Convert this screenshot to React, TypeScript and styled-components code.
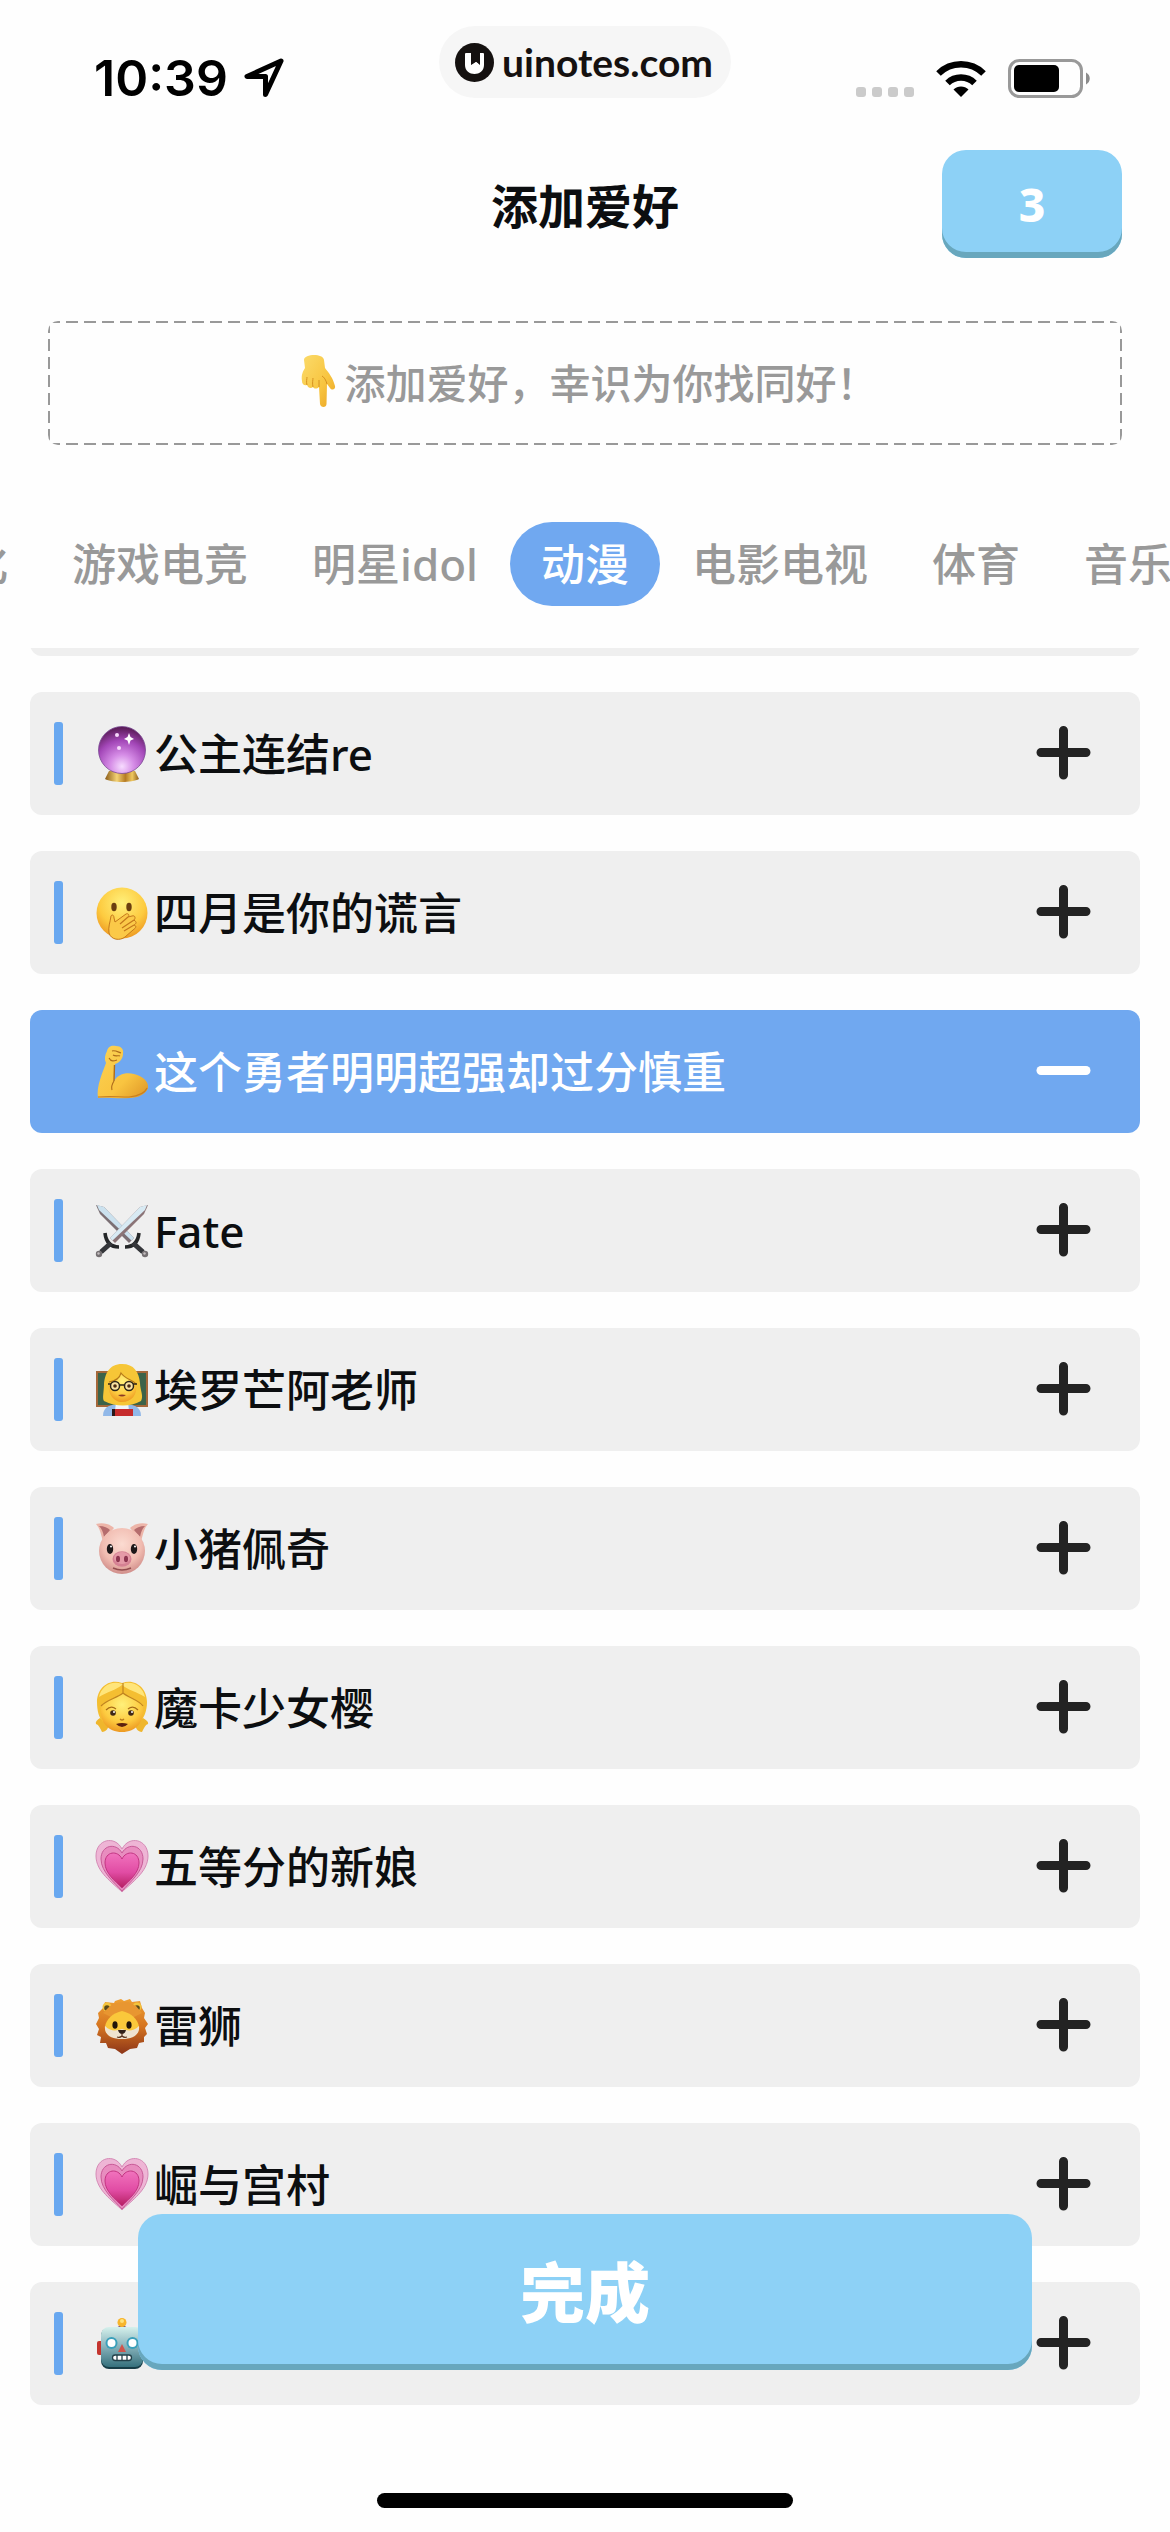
import React, { useLayoutEffect, useRef, useState } from "react";
import styled, { createGlobalStyle } from "styled-components";

const GlobalStyle = createGlobalStyle`
  *,
  *::before,
  *::after {
    box-sizing: border-box;
  }

  body {
    margin: 0;
    background: #fefefe;
    color: #0c0e10;
    font-family: "Noto Sans", "Noto Sans CJK SC", sans-serif;
  }

  button {
    border: none;
    padding: 0;
    margin: 0;
    background: none;
    color: inherit;
    font: inherit;
    cursor: pointer;
  }
`;

const Screen = styled.div`
  height: 100vh;
  display: flex;
  flex-direction: column;
  overflow: hidden;
`;

const StatusBar = styled.div`
  display: grid;
  grid-template-columns: 1fr auto 1fr;
  align-items: end;
  padding: 26px 79px 0;
`;

const Clock = styled.div`
  display: flex;
  align-items: center;
  gap: 16px;
  padding-left: 15px;
  color: #000;
  font-family: Inter, sans-serif;
  font-size: 50px;
  font-weight: 600;
  line-height: 40px;
`;

const Watermark = styled.a`
  display: flex;
  align-items: center;
  gap: 8px;
  height: 72px;
  padding: 0 18px 0 16px;
  border-radius: 36px;
  background: #f6f6f6;
  color: #151110;
  font-family: Lato, sans-serif;
  font-size: 39px;
  font-weight: 700;
  line-height: 48px;
  text-decoration: none;
`;

const StatusIcons = styled.div`
  display: flex;
  align-items: center;
  justify-content: flex-end;
  gap: 22px;
`;

const Header = styled.header`
  display: grid;
  grid-template-columns: 1fr auto 1fr;
  align-items: center;
  margin-top: 52px;
  padding: 0 48px;
`;

const Title = styled.h1`
  grid-column: 2;
  margin: 0;
  font-family: "Noto Sans CJK SC", sans-serif;
  font-size: 47px;
  font-weight: 700;
  line-height: 64px;
`;

const RaisedButton = styled.button`
  background: #8dd1f6;
  box-shadow: inset 0 -6px 0 #68a7bd;
  border-radius: 24px;
  color: #fff;
`;

const CountButton = styled(RaisedButton)`
  justify-self: end;
  width: 180px;
  height: 108px;
  font-size: 46px;
  font-weight: 800;
  line-height: 64px;
`;

const dash = "#999 0 12px, transparent 12px 18px";

const Hint = styled.p`
  display: flex;
  align-items: center;
  justify-content: center;
  height: 124px;
  margin: 63px 48px 0;
  padding-bottom: 4px;
  border-radius: 10px;
  background:
    repeating-linear-gradient(90deg, ${dash}) top / 100% 2px no-repeat,
    repeating-linear-gradient(90deg, ${dash}) bottom / 100% 2px no-repeat,
    repeating-linear-gradient(180deg, ${dash}) left / 2px 100% no-repeat,
    repeating-linear-gradient(180deg, ${dash}) right / 2px 100% no-repeat;
  color: #999;
  font-family: "Noto Sans CJK SC", sans-serif;
  font-size: 41px;
  font-weight: 500;
  line-height: 60px;
`;

const Tabs = styled.nav`
  display: flex;
  flex-shrink: 0;
  margin-top: 77px;
  overflow-x: auto;
  scrollbar-width: none;
`;

const Tab = styled.button<{ $active?: boolean }>`
  flex-shrink: 0;
  height: 84px;
  padding: 0 ${(props) => (props.$active ? "31px" : "32px")};
  border-radius: 42px;
  background: ${(props) => (props.$active ? "#70a8f0" : "transparent")};
  color: ${(props) => (props.$active ? "#fff" : "#999")};
  font-size: 44px;
  font-weight: 500;
  line-height: 64px;
  white-space: nowrap;
`;

const Content = styled.main`
  position: relative;
  flex: 1;
  min-height: 0;
  margin-top: 42px;
`;

const List = styled.ul`
  display: flex;
  flex-direction: column;
  gap: 36px;
  height: 100%;
  margin: 0;
  padding: 0 30px;
  overflow-y: auto;
  scrollbar-width: none;
  list-style: none;
`;

const Row = styled.li<{ $selected?: boolean }>`
  display: flex;
  flex-shrink: 0;
  align-items: center;
  height: 123px;
  padding: 0 49px 0 24px;
  border-radius: 12px;
  background: ${(props) => (props.$selected ? "#70a8f0" : "#efefef")};
  color: ${(props) => (props.$selected ? "#fff" : "inherit")};
`;

const Marker = styled.span<{ $hidden?: boolean }>`
  width: 9px;
  height: 63px;
  margin-right: 33px;
  border-radius: 3px;
  background: ${(props) => (props.$hidden ? "transparent" : "#69a8f0")};
`;

const Name = styled.span`
  flex-grow: 1;
  margin-left: 6px;
  font-size: 44px;
  font-weight: 500;
  line-height: 64px;
  white-space: nowrap;
`;

const ToggleButton = styled.button<{ $selected?: boolean }>`
  display: flex;
  color: ${(props) => (props.$selected ? "#fff" : "#232323")};
`;

const DoneButton = styled(RaisedButton)`
  position: absolute;
  right: 138px;
  bottom: 35px;
  left: 138px;
  height: 156px;
  padding-bottom: 6px;
  font-family: "Noto Sans CJK SC", sans-serif;
  font-size: 65px;
  font-weight: 900;
  line-height: 96px;
`;

const HomeArea = styled.footer`
  display: flex;
  justify-content: center;
  padding: 88px 0 24px;
`;

const HomeIndicator = styled.div`
  width: 416px;
  height: 15px;
  border-radius: 8px;
  background: #000;
`;

const EmojiSvg = styled.svg`
  flex-shrink: 0;
  width: 52px;
  height: 52px;
  overflow: visible;
`;

const PointDown = () => (
  <>
    <defs>
      <linearGradient id="point" x1="0" y1="0" x2="1" y2="1">
        <stop offset="0" stopColor="#fbdb6b" />
        <stop offset="0.6" stopColor="#f8c540" />
        <stop offset="1" stopColor="#e9a224" />
      </linearGradient>
    </defs>
    <path
      d="M11 5C11-1 30-2 31 5L32 13C36 18 40 23 42 31C43 34 39 36 37 33L34 29L33.500 49C33.500 53 27.500 53 27 49L26 32C24 34 21 34 20 32C18 34 15 33 14 30C11 31 9 29 9 26C8 20 10 16 12 13Z"
      fill="url(#point)"
    />
    <path d="M14 30C13 27 14 24 14 22M20 32C19 28 20 25 20 23M26 32L26 25M34 29C33 25 31 22 29 21" fill="none" stroke="#d6921f" strokeWidth="1" />
  </>
);

const CrystalBall = () => (
  <>
    <defs>
      <radialGradient id="ball" cx="0.5" cy="0.85" r="0.85">
        <stop offset="0" stopColor="#f7dcff" />
        <stop offset="0.3" stopColor="#d58ce6" />
        <stop offset="0.65" stopColor="#a347b8" />
        <stop offset="1" stopColor="#54184f" />
      </radialGradient>
      <linearGradient id="ballBase">
        <stop offset="0" stopColor="#8a5a18" />
        <stop offset="0.35" stopColor="#f4d375" />
        <stop offset="0.6" stopColor="#b57b25" />
        <stop offset="0.8" stopColor="#efc85f" />
        <stop offset="1" stopColor="#8d5e1b" />
      </linearGradient>
    </defs>
    <path d="M13 43H39L43 51C36 55 16 55 9 51Z" fill="url(#ballBase)" />
    <circle cx="26" cy="22" r="23.500" fill="url(#ball)" stroke="#7a4a94" strokeWidth="0.800" />
    <path d="M33 5L34.500 9L38 11L34.500 12.500L33 17L31.500 12.500L28 11L31.500 9Z" fill="#fff" />
    <circle cx="21" cy="7" r="2" fill="#f6d9fb" />
    <circle cx="23" cy="20" r="2" fill="#f6d9fb" />
  </>
);

const FaceGradient = ({ id }: { id: string }) => (
  <defs>
    <radialGradient id={id} cx="0.5" cy="0.3" r="0.75">
      <stop offset="0" stopColor="#fff07a" />
      <stop offset="0.6" stopColor="#fdcb40" />
      <stop offset="1" stopColor="#ea8f1c" />
    </radialGradient>
  </defs>
);

const HandOverMouth = () => (
  <>
    <FaceGradient id="shyFace" />
    <circle cx="26" cy="26" r="25.500" fill="url(#shyFace)" />
    <ellipse cx="18" cy="20" rx="2.700" ry="4.200" fill="#6b3f10" />
    <ellipse cx="33" cy="20" rx="2.700" ry="4.200" fill="#6b3f10" />
    <path
      d="M15 29C16 27 18 28 18 31L19 35L30 27C32 26 34 28 32 30L36 29C39 28 40 31 38 33L39 34C41 35 40 37 38 38C41 39 40 41 37 43L29 50C24 54 15 53 13 46C12 40 14 36 15 29Z"
      fill="#fbc948"
      stroke="#c4781b"
      strokeWidth="1"
    />
    <path d="M24 37L32 30M26 41L38 33M28 44L38 38" stroke="#c4781b" strokeWidth="1.200" />
  </>
);

const Biceps = () => (
  <>
    <defs>
      <linearGradient id="arm" x1="0" y1="0" x2="1" y2="1">
        <stop offset="0" stopColor="#fbd356" />
        <stop offset="0.6" stopColor="#f9c440" />
        <stop offset="1" stopColor="#dd9426" />
      </linearGradient>
    </defs>
    <path
      d="M11 5C12 0 16-1 20 0C25 0 28 3 27 8C27 13 23 17 19 18L18 35C22 28 30 26 38 28C47 30 53 36 52 42C50 48 42 52 34 52C22 53 11 51 2 52C0 40 7 26 10 17C8 13 9 9 11 5Z"
      fill="url(#arm)"
    />
    <path d="M16 5C19 4 22 6 25 7M17 9C20 11 23 9 24 10M13 12C15 16 18 15 21 14M18 35C16 38 15 40 16 44" fill="none" stroke="#ad6b1b" strokeWidth="1.100" />
    <path d="M18.500 19L18 35" stroke="#ad6b1b" strokeWidth="1.400" />
    <path d="M2 51C14 50 22 51 33 51C42 50 49 47 51 42" fill="none" stroke="#c97f20" strokeWidth="1.200" />
  </>
);

const Swords = () => (
  <>
    <path d="M0 0L8 2L38 33L33 38L4 9Z" fill="#7b6f74" />
    <path d="M1 0L8 2L38 33L35.500 35.500L3 5Z" fill="#cbe1ee" />
    <path d="M52 0L44 2L14 33L19 38L48 9Z" fill="#8b7477" />
    <path d="M51 0L44 2L14 33L16.500 35.500L49 5Z" fill="#d8eaf3" />
    <path d="M9 28C10 37 15 42 23 42M43 28C42 37 37 42 29 42" fill="none" stroke="#252729" strokeWidth="3.600" />
    <path d="M15 38L5 47M37 38L47 47" stroke="#34363a" strokeWidth="5" />
    <circle cx="3" cy="49" r="3.200" fill="#746f72" />
    <circle cx="49" cy="49" r="3.200" fill="#746f72" />
    <circle cx="2.500" cy="48.500" r="1.200" fill="#c4bec0" />
    <circle cx="48.500" cy="48.500" r="1.200" fill="#c4bec0" />
  </>
);

const Teacher = () => (
  <>
    <FaceGradient id="teacherFace" />
    <rect x="1" y="8" width="50" height="34" fill="#3c6349" stroke="#a5683a" strokeWidth="2" />
    <path d="M7 52C7 42 15 40 26 40C37 40 45 42 45 52Z" fill="#91b8e8" />
    <path d="M20 38H32L33 47H19Z" fill="#f2f5f9" />
    <path d="M26 0C13 0 9 10 8 20C8 28 6 34 8 37C20 43 34 43 45 37C48 32 44 26 44 19C43 8 38 0 26 0Z" fill="#f6c637" />
    <path d="M13 18C21 17 24 12 25 9C29 15 37 16 40 20C42 31 35 38 26 38C18 38 11 30 13 18Z" fill="url(#teacherFace)" />
    <path d="M13 18C20 17 24 13 25 9C29 15 37 16 40 20" fill="none" stroke="#b57918" strokeWidth="1.100" />
    <circle cx="19" cy="22" r="4.500" fill="#f8e2a3" stroke="#2c2519" strokeWidth="1.500" />
    <circle cx="33" cy="22" r="4.500" fill="#f8e2a3" stroke="#2c2519" strokeWidth="1.500" />
    <path d="M12 20H15M23.500 21H28.500M37 20H41" stroke="#2c2519" strokeWidth="1.500" />
    <circle cx="19" cy="22" r="1.800" fill="#4b2c12" />
    <circle cx="33" cy="22" r="1.800" fill="#4b2c12" />
    <path d="M22 31Q26 34 30 31Q26 30 22 31" fill="#8c3a25" />
    <path d="M17 45H37V52H17Z" fill="#c62b2c" />
    <path d="M16 45H19V52H16Z" fill="#2b1717" />
  </>
);

const Pig = () => (
  <>
    <defs>
      <radialGradient id="pigFace" cx="0.5" cy="0.35" r="0.7">
        <stop offset="0" stopColor="#fbdbd1" />
        <stop offset="0.6" stopColor="#f1bcb1" />
        <stop offset="1" stopColor="#c98482" />
      </radialGradient>
    </defs>
    <path d="M0 1C7-1 14 1 18 5L7 18C5 12 4 5 0 1ZM52 1C45-1 38 1 34 5L45 18C47 12 48 5 52 1Z" fill="#edb5a9" />
    <path d="M3 3C8 3 12 5 14 7L8 14C7 9 6 6 3 3ZM49 3C44 3 40 5 38 7L44 14C45 9 46 6 49 3Z" fill="#b56c6d" />
    <ellipse cx="26" cy="28" rx="23" ry="23" fill="url(#pigFace)" />
    <ellipse cx="14" cy="26" rx="3.200" ry="5" fill="#1d1718" />
    <ellipse cx="38" cy="26" rx="3.200" ry="5" fill="#1d1718" />
    <circle cx="15" cy="23.500" r="1" fill="#fff" />
    <circle cx="39" cy="23.500" r="1" fill="#fff" />
    <ellipse cx="26" cy="36" rx="9.500" ry="7.800" fill="#d58193" />
    <ellipse cx="26" cy="35" rx="8" ry="6" fill="#e59aa7" />
    <ellipse cx="22" cy="36" rx="2" ry="3.200" fill="#8e3650" />
    <ellipse cx="30" cy="36" rx="2" ry="3.200" fill="#8e3650" />
    <path d="M17 45Q26 49 35 45" fill="none" stroke="#934c4e" strokeWidth="1.500" />
  </>
);

const Girl = () => (
  <>
    <FaceGradient id="girlFace" />
    <path d="M4 36C1 38-1 40 0 42C3 43 4 46 6 50C10 50 13 46 13 41ZM47 36C50 38 53 40 52 42C49 43 48 46 46 50C42 50 39 46 39 41Z" fill="#efb62d" />
    <path d="M26 1C13-4 1 6 1 20C1 29 3 36 7 40H44C48 36 51 29 51 20C51 6 39-4 26 1Z" fill="#f4be31" />
    <path d="M26 2C15-2 5 5 3 15C11 10 20 8 26 3C32 8 41 10 49 15C47 5 37-2 26 2Z" fill="#ffe57a" />
    <path d="M27 11C21 16 10 18 5 24C3 40 12 50 26 50C40 50 49 40 47 24C43 18 33 16 27 11Z" fill="url(#girlFace)" />
    <path d="M27 1V11C21 16 10 18 5 24M27 11C33 16 43 18 47 24" fill="none" stroke="#c08420" strokeWidth="1.200" />
    <path d="M10 28Q15 23 20 27M32 27Q37 23 42 28" fill="none" stroke="#a86c18" strokeWidth="1.200" />
    <circle cx="17" cy="31" r="2.800" fill="#402716" />
    <circle cx="35" cy="31" r="2.800" fill="#402716" />
    <circle cx="18" cy="30" r="1" fill="#fff" />
    <circle cx="36" cy="30" r="1" fill="#fff" />
    <path d="M24 37Q26 39 28 37" fill="none" stroke="#b97b1c" strokeWidth="1.200" />
    <path d="M20 42Q26 40 32 42Q26 48 20 42" fill="#5b210f" />
  </>
);

const Heart = () => (
  <>
    <defs>
      <linearGradient id="heart" x1="0" y1="0" x2="0" y2="1">
        <stop offset="0" stopColor="#f173bd" />
        <stop offset="0.55" stopColor="#e14ca4" />
        <stop offset="1" stopColor="#b51f62" />
      </linearGradient>
    </defs>
    <path d="M26 51C17 42 0 31 0 15C0-2 19-6 26 8C33-6 52-2 52 15C52 31 35 42 26 51Z" fill="#eeb5d5" stroke="#d58bb6" strokeWidth="1" />
    <path d="M26 50C19 42 5 31 5 18C5 4 20 1 26 12C32 1 47 4 47 18C47 31 33 42 26 50Z" fill="#e88dbf" stroke="#c85a97" strokeWidth="1" />
    <path d="M26 47C19 40 9 32 9 22C9 10 22 9 26 18C30 9 43 10 43 22C43 32 33 40 26 47Z" fill="url(#heart)" stroke="#c33482" strokeWidth="1" />
  </>
);

const Lion = () => (
  <>
    <defs>
      <linearGradient id="mane" x1="0" y1="0" x2="0" y2="1">
        <stop offset="0" stopColor="#efa033" />
        <stop offset="0.5" stopColor="#d57420" />
        <stop offset="1" stopColor="#8c3518" />
      </linearGradient>
    </defs>
    <path
      d="M19 1L25-1L28 1L34-1L36 2L44 1L46 8L49 13L48 18L52 24L49 28L51 34L48 37L48 42L43 43L41 48L34 49L26 54L19 49L12 48L10 43L4 43L5 37L1 35L3 29L0 24L3 18L2 13L7 8L9 2L18 3Z"
      fill="url(#mane)"
    />
    <circle cx="11" cy="7" r="4.500" fill="#f3c43d" />
    <circle cx="41" cy="7" r="4.500" fill="#f3c43d" />
    <circle cx="11" cy="8" r="2.800" fill="#5b4b1a" />
    <circle cx="41" cy="8" r="2.800" fill="#5b4b1a" />
    <path d="M7 13L14 6L20 3L32 2L40 6L46 13L38 17H15Z" fill="#e89631" />
    <path d="M26 11C17 13 10 19 9 27C9 34 15 38 26 38C37 38 43 34 43 27C42 19 35 13 26 11Z" fill="#fac83b" />
    <path d="M9 26C16 33 22 30 26 29C30 30 36 33 43 26C44 34 38 39 26 39C14 39 8 34 9 26Z" fill="#efe3cf" />
    <ellipse cx="19" cy="25" rx="2.600" ry="3.800" fill="#211509" />
    <ellipse cx="33" cy="25" rx="2.600" ry="3.800" fill="#211509" />
    <path d="M22 30H30Q29 34 26 34Q23 34 22 30" fill="#302019" />
    <path d="M26 33V36M21 37Q24 38 26 36Q28 38 31 37" fill="none" stroke="#57331f" strokeWidth="1.200" />
  </>
);

const Robot = () => (
  <>
    <defs>
      <linearGradient id="robot" x1="0" y1="0" x2="0" y2="1">
        <stop offset="0" stopColor="#d5f1ec" />
        <stop offset="0.45" stopColor="#8eb7bf" />
        <stop offset="1" stopColor="#35707c" />
      </linearGradient>
    </defs>
    <path d="M20 10Q26 5 32 10L30 13H22Z" fill="#624178" />
    <circle cx="26" cy="4.500" r="4.500" fill="#f7b52c" />
    <circle cx="26" cy="3" r="2" fill="#ffe37a" />
    <rect x="1" y="23" width="6" height="14" rx="2" fill="#c4342e" />
    <rect x="45" y="23" width="6" height="14" rx="2" fill="#c4342e" />
    <rect x="5" y="10" width="42" height="41" rx="8" fill="#173d47" />
    <rect x="5" y="9" width="42" height="40" rx="8" fill="url(#robot)" />
    <circle cx="15.500" cy="25" r="6" fill="#3aa0bb" />
    <circle cx="15.500" cy="25" r="4" fill="#fff" />
    <circle cx="36.500" cy="25" r="6" fill="#3aa0bb" />
    <circle cx="36.500" cy="25" r="4" fill="#fff" />
    <path d="M26 26L30 34H22Z" fill="#d0544c" />
    <rect x="16.500" y="37" width="19" height="5.500" rx="2.700" fill="#fff" stroke="#24414a" strokeWidth="1.300" />
    <path d="M21 37V42.500M26 37V42.500M31 37V42.500" stroke="#24414a" strokeWidth="1.300" />
  </>
);

const Emoji = ({ art: Art }: { art: () => React.JSX.Element }) => (
  <EmojiSvg viewBox="0 0 52 52" aria-hidden="true">
    <Art />
  </EmojiSvg>
);

const ToggleIcon = ({ selected }: { selected: boolean }) => (
  <svg width="55" height="55" viewBox="0 0 55 55" stroke="currentColor" strokeWidth="9" strokeLinecap="round" aria-hidden="true">
    <path d={selected ? "M5 26.500H50" : "M5 26.500H50M27.500 4.500V49"} />
  </svg>
);

const LocationIcon = () => (
  <svg width="40" height="40" viewBox="0 0 40 40" fill="none" stroke="#000" strokeWidth="5" strokeLinejoin="round" aria-hidden="true">
    <path d="M37 3L3 18.500H21.500V36.500Z" />
  </svg>
);

const SignalIcon = () => (
  <svg width="58" height="39" viewBox="0 0 58 39" fill="#cbcbcb" aria-hidden="true">
    {[0, 16, 32, 48].map((x) => (
      <rect key={x} x={x} y="28" width="10" height="10" rx="3" />
    ))}
  </svg>
);

const WifiIcon = () => (
  <svg width="50" height="39" viewBox="0 0 50 39" aria-hidden="true">
    <path d="M25 38L17.500 30.500C21.500 26.500 28.500 26.500 32.500 30.500Z" />
    <path d="M11.500 24C19 16.700 31 16.700 38.500 24" fill="none" stroke="#000" strokeWidth="6.500" />
    <path d="M2.500 14.500C15 2.200 35 2.200 47.500 14.500" fill="none" stroke="#000" strokeWidth="6.500" />
  </svg>
);

const BatteryIcon = () => (
  <svg width="83" height="39" viewBox="0 0 83 39" aria-hidden="true">
    <rect x="1.500" y="1.500" width="72" height="36" rx="10" fill="none" stroke="#999" strokeWidth="3" />
    <rect x="6" y="6" width="45" height="27" rx="5" />
    <path d="M78 13.500C83 16 83 23 78 25.500Z" fill="#8c8c8c" />
  </svg>
);

const WatermarkLogo = () => (
  <svg width="39" height="39" viewBox="0 0 39 39" aria-hidden="true">
    <circle cx="19.500" cy="19.500" r="19.500" fill="#151110" />
    <path d="M10 11Q10 10 11 10H16V22L21.500 18.500L25 22V10H28Q29 10 29 11V22C29 34 10 34 10 22Z" fill="#fff" />
    <path d="M16.500 9H25V21.500L20.700 18.500L16.500 21.500Z" fill="#151110" />
  </svg>
);

const tabs = ["文化", "游戏电竞", "明星idol", "动漫", "电影电视", "体育", "音乐"];

const hobbies = [
  { id: 1, name: "公主连结re", art: CrystalBall },
  { id: 2, name: "四月是你的谎言", art: HandOverMouth },
  { id: 3, name: "这个勇者明明超强却过分慎重", art: Biceps },
  { id: 4, name: "Fate", art: Swords },
  { id: 5, name: "埃罗芒阿老师", art: Teacher },
  { id: 6, name: "小猪佩奇", art: Pig },
  { id: 7, name: "魔卡少女樱", art: Girl },
  { id: 8, name: "五等分的新娘", art: Heart },
  { id: 9, name: "雷狮", art: Lion },
  { id: 10, name: "崛与宫村", art: Heart },
  { id: 11, name: "", art: Robot },
];

const App = () => {
  const nav = useRef<HTMLElement>(null);
  const list = useRef<HTMLUListElement>(null);
  const [activeTab, setActiveTab] = useState("动漫");
  const [selected, setSelected] = useState<number[]>([3]);

  // keep the active tab in the middle of the strip
  useLayoutEffect(() => {
    const tab = nav.current?.querySelector<HTMLElement>("[aria-current]");
    if (nav.current && tab) {
      nav.current.scrollLeft = tab.offsetLeft - nav.current.offsetLeft - (nav.current.clientWidth - tab.offsetWidth) / 2;
    }
  }, [activeTab]);

  useLayoutEffect(() => {
    if (list.current) {
      list.current.scrollTop = list.current.scrollHeight;
    }
  }, []);

  const toggle = (id: number) =>
    setSelected((ids) => (ids.includes(id) ? ids.filter((other) => other !== id) : [...ids, id]));

  return (
    <>
      <GlobalStyle />
      <Screen>
        <StatusBar>
          <Clock>
            10:39
            <LocationIcon />
          </Clock>
          <Watermark href="#">
            <WatermarkLogo />
            uinotes.com
          </Watermark>
          <StatusIcons>
            <SignalIcon />
            <WifiIcon />
            <BatteryIcon />
          </StatusIcons>
        </StatusBar>
        <Header>
          <Title>添加爱好</Title>
          <CountButton type="button">3</CountButton>
        </Header>
        <Hint>
          <Emoji art={PointDown} />
          添加爱好，幸识为你找同好！
        </Hint>
        <Tabs ref={nav}>
          {tabs.map((tab) => (
            <Tab
              key={tab}
              type="button"
              $active={tab === activeTab}
              aria-current={tab === activeTab ? "true" : undefined}
              onClick={() => setActiveTab(tab)}
            >
              {tab}
            </Tab>
          ))}
        </Tabs>
        <Content>
          <List ref={list}>
            <Row />
            {hobbies.map(({ id, name, art }) => {
              const isSelected = selected.includes(id);
              return (
                <Row key={id} $selected={isSelected}>
                  <Marker $hidden={isSelected} />
                  <Emoji art={art} />
                  <Name id={`hobby-${id}`}>{name}</Name>
                  <ToggleButton
                    type="button"
                    $selected={isSelected}
                    aria-pressed={isSelected}
                    aria-labelledby={`hobby-${id}`}
                    onClick={() => toggle(id)}
                  >
                    <ToggleIcon selected={isSelected} />
                  </ToggleButton>
                </Row>
              );
            })}
          </List>
          <DoneButton type="button">完成</DoneButton>
        </Content>
        <HomeArea>
          <HomeIndicator />
        </HomeArea>
      </Screen>
    </>
  );
};

export default App;
